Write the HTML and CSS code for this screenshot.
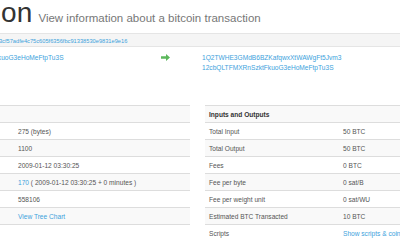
FILE: index.html
```html
<!DOCTYPE html>
<html lang="en">
<head>
    <meta charset="UTF-8">
    <meta name="viewport" content="width=device-width, initial-scale=1.0">
    <title>Transaction</title>
    <link rel="stylesheet" href="styles.css">
</head>
<body>
  <div class="pagina">

    <h1 class="titulo">Transaction<small> View information about a bitcoin transaction</small></h1>

    <div class="hash">
      <a href="#">f4184fc596403b9d638783cf57adfe4c75c605f6356fbc91338530e9831e9e16</a>
    </div>

    <section class="enderecos">
      <div class="entradas">
        <a href="#">12cbQLTFMXRnSzktFkuoG3eHoMeFtpTu3S</a>
      </div>
      <div class="seta">
        <svg width="9" height="7" viewBox="0 0 9 7"><path d="M0 2.2h5V0l4 3.5L5 7V4.8H0z" fill="#5cb85c"/></svg>
      </div>
      <div class="saidas">
        <a href="#">1Q2TWHE3GMdB6BZKafqwxXtWAWgFt5Jvm3</a>
        <a href="#">12cbQLTFMXRnSzktFkuoG3eHoMeFtpTu3S</a>
      </div>
    </section>

    <section class="tabelas">
      <table class="tabela resumo">
        <tr><th colspan="2">Summary</th></tr>
        <tr><td>Size</td><td>275 (bytes)</td></tr>
        <tr><td>Weight</td><td>1100</td></tr>
        <tr><td>Received Time</td><td>2009-01-12 03:30:25</td></tr>
        <tr><td>Included In Blocks</td><td><a href="#">170</a> ( 2009-01-12 03:30:25 + 0 minutes )</td></tr>
        <tr><td>Confirmations</td><td>558106</td></tr>
        <tr><td>Visualize</td><td><a href="#">View Tree Chart</a></td></tr>
      </table>

      <table class="tabela valores">
        <tr><th colspan="2">Inputs and Outputs</th></tr>
        <tr><td>Total Input</td><td>50 BTC</td></tr>
        <tr><td>Total Output</td><td>50 BTC</td></tr>
        <tr><td>Fees</td><td>0 BTC</td></tr>
        <tr><td>Fee per byte</td><td>0 sat/B</td></tr>
        <tr><td>Fee per weight unit</td><td>0 sat/WU</td></tr>
        <tr><td>Estimated BTC Transacted</td><td>10 BTC</td></tr>
        <tr><td>Scripts</td><td><a href="#">Show scripts &amp; coinbase</a></td></tr>
      </table>
    </section>

  </div>
</body>
</html>
```

FILE: styles.css
```css
* {
box-sizing: border-box;
}

body {
margin: 0;
overflow: hidden;
background-color: #fff;
font-family: 'Liberation Sans', Arial, sans-serif;
color: #555;
}

a {
color: #3ca2dc;
text-decoration: none;
}

.pagina {
width: 690px;
margin-left: -140px;
}

.titulo {
margin: 0;
padding: 0 0 7px 27px;
font-size: 28px;
font-weight: normal;
line-height: 26px;
color: #333;
white-space: nowrap;
border-bottom: 1px solid #e5e5e5;
}

.titulo small {
margin-left: 3px;
font-size: 11.5px;
line-height: 12px;
color: #777;
}

.hash {
height: 13px;
padding: 2px 0 0 76px;
background-color: #f5f5f5;
border-bottom: 1px solid #e5e5e5;
font-size: 5.7px;
line-height: 10px;
white-space: nowrap;
}

.enderecos {
display: flex;
padding-top: 6px;
font-size: 6.6px;
line-height: 10px;
white-space: nowrap;
}

.entradas {
width: 301px;
padding-left: 72px;
}

.seta {
width: 41px;
padding-top: 1px;
}

.saidas {
display: flex;
flex-direction: column;
}

.tabelas {
display: flex;
align-items: flex-start;
gap: 15px;
margin-top: 32px;
}

.tabela {
width: 330px;
border-collapse: collapse;
font-size: 6.6px;
}

.tabela th,
.tabela td {
height: 17px;
padding: 0 4px;
border-top: 1px solid #ddd;
text-align: left;
white-space: nowrap;
}

.tabela th {
color: #333;
}

.tabela tr:nth-child(odd) {
background-color: #f9f9f9;
}

.resumo {
border-bottom: 1px solid #ddd;
}

.resumo td:first-child {
width: 154px;
}

.valores td:first-child {
width: 134px;
}
```
